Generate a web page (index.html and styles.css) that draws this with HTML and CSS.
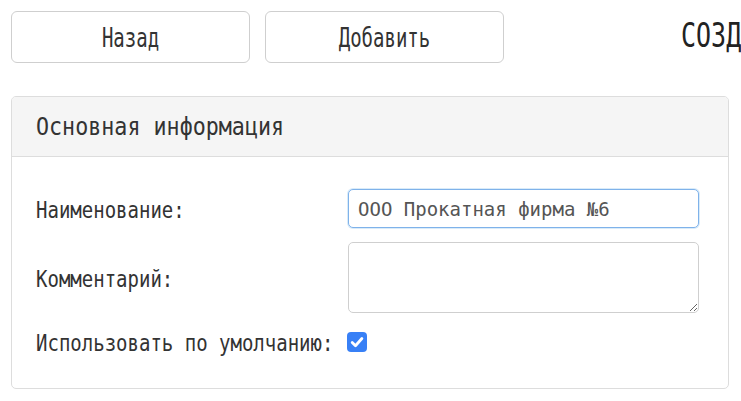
FILE: index.html
```html
<!DOCTYPE html>
<html lang="ru">
<head>
<meta charset="utf-8">
<title>Создание</title>
<link rel="stylesheet" href="styles.css">
</head>
<body>
<div class="page">
  <div class="toolbar">
    <button class="btn" type="button"><span class="tall-btn">Назад</span></button>
    <button class="btn" type="button"><span class="tall-btn">Добавить</span></button>
    <h1 class="title"><span class="tall-title">СОЗДАНИЕ</span></h1>
  </div>

  <section class="panel">
    <div class="panel-heading"><span class="tall-head">Основная информация</span></div>
    <div class="panel-body">
      <label class="label" for="name"><span class="tall">Наименование:</span></label>
      <input class="input" id="name" type="text" value="ООО Прокатная фирма №6">

      <label class="label" for="comment"><span class="tall">Комментарий:</span></label>
      <textarea class="textarea" id="comment"></textarea>

      <label class="label"><span class="tall">Использовать по умолчанию:</span></label>
      <div class="check-cell">
        <span class="checkbox" role="checkbox" aria-checked="true">
          <svg viewBox="0 0 20 20" width="20" height="20" aria-hidden="true">
            <path d="M5.2 10.4l3.3 3.3 6.4-7.2" fill="none" stroke="#fff" stroke-width="2.8" stroke-linecap="round" stroke-linejoin="round"/>
          </svg>
        </span>
      </div>
    </div>
  </section>
</div>
</body>
</html>
```

FILE: styles.css
```css
html, body {
  margin: 0;
  padding: 0;
  background: #fff;
  overflow: hidden;
}

body {
  font-family: "DejaVu Sans Mono", "Liberation Mono", monospace;
  color: #333;
}

.page {
  padding: 11px;
  width: 741px;
  box-sizing: border-box;
}

.toolbar {
  display: flex;
  align-items: center;
  height: 52px;
  margin-bottom: 33px;
  white-space: nowrap;
}

.btn {
  flex: 0 0 239px;
  width: 239px;
  height: 52px;
  margin-right: 15px;
  border: 1px solid #cfcfcf;
  border-radius: 6px;
  background: #fff;
  font-family: inherit;
  font-size: 19px;
  color: #333;
  padding: 0;
  cursor: pointer;
}

.btn:nth-of-type(2) {
  margin-right: 0;
}

.tall-btn {
  display: inline-block;
  transform: scaleY(1.42);
}

.title {
  flex: 0 0 auto;
  margin: -3px 0 0 177px;
  font-size: 25px;
  font-weight: normal;
  color: #222;
}

.tall-title {
  display: inline-block;
  transform: scaleY(1.36);
}

.panel {
  width: 718px;
  box-sizing: border-box;
  border: 1px solid #ddd;
  border-radius: 5px;
  overflow: hidden;
}

.panel-heading {
  height: 59px;
  display: flex;
  align-items: center;
  padding-left: 24px;
  background: #f5f5f5;
  border-bottom: 1px solid #ddd;
  font-size: 21.7px;
  color: #333;
}

.tall-head {
  display: inline-block;
  transform: scaleY(1.14);
}

.panel-body {
  display: grid;
  grid-template-columns: 312px 351px;
  grid-template-rows: 39px 71px 30px;
  row-gap: 14px;
  padding: 32px 29px 31px 24px;
  align-items: center;
}

.label {
  font-size: 19px;
  color: #333;
  white-space: nowrap;
}

.tall {
  display: inline-block;
  transform: scaleY(1.23);
}

.input,
.textarea {
  box-sizing: border-box;
  width: 351px;
  margin: 0;
  font-family: inherit;
  font-size: 19px;
  color: #555;
  background: #fff;
  border-radius: 5px;
}

.input {
  height: 39px;
  padding: 0 9px;
  border: 1px solid #7fb2ea;
  box-shadow: 0 0 0 1px rgba(102, 175, 233, 0.25);
  outline: none;
}

.textarea {
  height: 71px;
  padding: 6px 9px;
  border: 1px solid #cfcfcf;
  resize: both;
  outline: none;
}

.check-cell {
  display: flex;
  align-items: center;
}

.checkbox {
  display: block;
  width: 20px;
  height: 20px;
  border-radius: 4px;
  background: #3880f6;
  margin-left: -1px;
}

.checkbox svg {
  display: block;
}
```
